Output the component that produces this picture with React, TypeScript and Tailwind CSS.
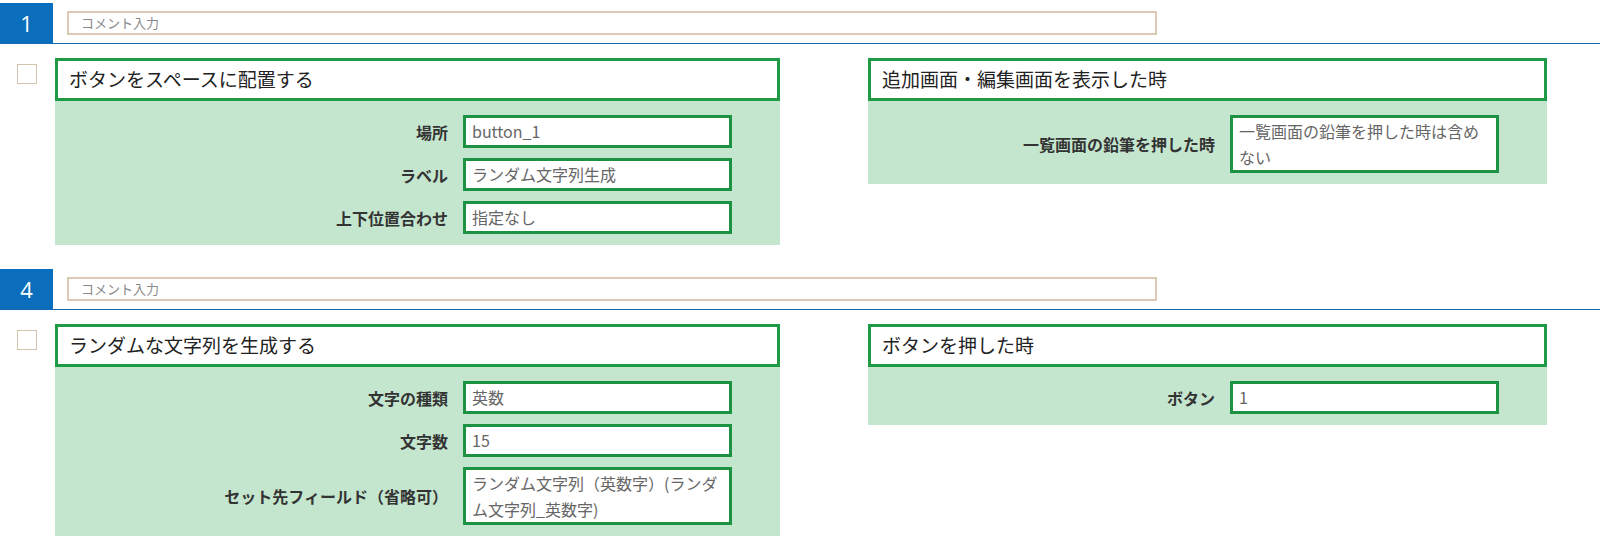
const jp = "font-['Noto_Sans_CJK_JP','Noto_Sans',sans-serif]"

interface Field {
  label: string
  value: string
}

interface Card {
  title: string
  fields: Field[]
}

interface Step {
  no: string
  left: Card
  right: Card
}

const steps: Step[] = [
  {
    no: "1",
    left: {
      title: "ボタンをスペースに配置する",
      fields: [
        { label: "場所", value: "button_1" },
        { label: "ラベル", value: "ランダム文字列生成" },
        { label: "上下位置合わせ", value: "指定なし" },
      ],
    },
    right: {
      title: "追加画面・編集画面を表示した時",
      fields: [{ label: "一覧画面の鉛筆を押した時", value: "一覧画面の鉛筆を押した時は含めない" }],
    },
  },
  {
    no: "4",
    left: {
      title: "ランダムな文字列を生成する",
      fields: [
        { label: "文字の種類", value: "英数" },
        { label: "文字数", value: "15" },
        { label: "セット先フィールド（省略可）", value: "ランダム文字列（英数字）(ランダム文字列_英数字)" },
      ],
    },
    right: {
      title: "ボタンを押した時",
      fields: [{ label: "ボタン", value: "1" }],
    },
  },
]

function CardBox({ card, className }: { card: Card; className: string }) {
  return (
    <div className={className}>
      {/* タイトル */}
      <div className="h-[43px] border-[3px] border-[#1f9a47] bg-white flex items-center px-[11px] text-[19px] text-[#222]">
        {card.title}
      </div>
      {/* 設定 */}
      <div className="bg-[#c5e6ce] pt-[14px] pb-[11px] pr-[48px] flex flex-col gap-[10px]">
        {card.fields.map((f) => (
          <div key={f.label} className="flex items-center justify-end gap-[15px]">
            <div className="text-[16px] font-bold text-[#333] whitespace-nowrap">{f.label}</div>
            <div className="w-[269px] min-h-[33px] border-[3px] border-[#1c9243] bg-white px-[6px] text-[16px] leading-[26px] text-[#666] break-all">
              {f.value}
            </div>
          </div>
        ))}
      </div>
    </div>
  )
}

export default function App() {
  return (
    <div className={`${jp} bg-white w-[1600px] h-[548px] pt-[3px]`}>
      {steps.map((step, i) => (
        <div key={step.no} className={i > 0 ? "mt-[24px]" : ""}>
          {/* 番号 + コメント */}
          <div className="flex h-[41px] border-b border-[#1469b0]">
            <div className="w-[53px] h-10 bg-[#0a6ebd] text-white flex items-center justify-center text-[22px] font-medium font-['Open_Sans',sans-serif]">
              {step.no}
            </div>
            <div className="ml-[14px] mt-2 h-6 w-[1090px] border-2 border-[#dacab6] flex items-center pl-[12px] text-[13px] text-[#888]">
              コメント入力
            </div>
          </div>

          <div className="flex items-start mt-[14px]">
            <div className="ml-[17px] mt-[6px] w-5 h-5 border border-[#d4c3ad] bg-white"></div>
            <CardBox card={step.left} className="ml-[18px] w-[725px]" />
            <CardBox card={step.right} className="ml-[88px] w-[679px]" />
          </div>
        </div>
      ))}
    </div>
  )
}
